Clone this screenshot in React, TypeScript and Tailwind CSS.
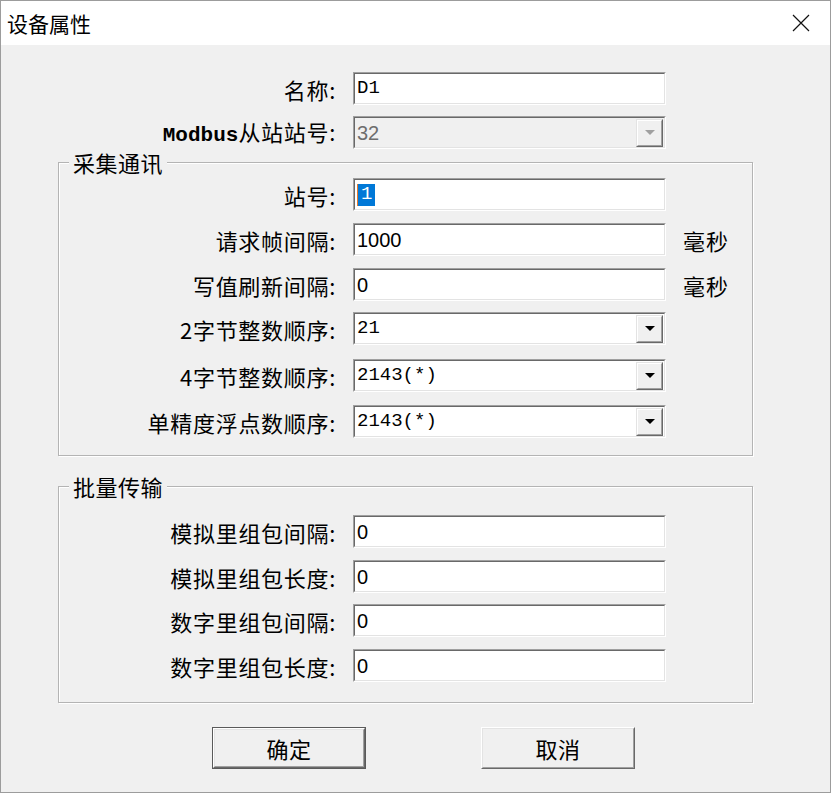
import React from "react";

const CJK = "font-['Noto_Sans_CJK_SC',sans-serif]";
const MONO = "font-['Liberation_Mono','Noto_Sans_CJK_SC',monospace]";
const SANS = "font-['Liberation_Sans',sans-serif]";

function Field({
  children,
  disabled = false,
}: {
  children?: React.ReactNode;
  disabled?: boolean;
}) {
  return (
    <div className="h-[33px] w-[313px] border border-t-[#a0a0a0] border-l-[#a0a0a0] border-b-white border-r-white">
      <div
        className={`flex h-full w-full items-center border border-t-[#696969] border-l-[#696969] border-b-[#e3e3e3] border-r-[#e3e3e3] pl-[2px] ${
          disabled ? "bg-[#f0f0f0]" : "bg-white"
        }`}
      >
        {children}
      </div>
    </div>
  );
}

function DropBtn({ disabled = false }: { disabled?: boolean }) {
  return (
    <div className="ml-auto mr-[1px] h-[28px] w-[27px] border border-t-[#e3e3e3] border-l-[#e3e3e3] border-b-[#696969] border-r-[#696969]">
      <div className="flex h-full w-full items-center justify-center border border-t-white border-l-white border-b-[#a0a0a0] border-r-[#a0a0a0] bg-[#f0f0f0]">
        <div
          className={`h-0 w-0 border-l-[5px] border-r-[5px] border-t-[5px] border-l-transparent border-r-transparent ${
            disabled ? "border-t-[#a0a0a0]" : "border-t-black"
          }`}
        />
      </div>
    </div>
  );
}

function Row({
  label,
  inGroup = false,
  children,
  extra,
  className = "",
}: {
  label: React.ReactNode;
  inGroup?: boolean;
  children: React.ReactNode;
  extra?: React.ReactNode;
  className?: string;
}) {
  return (
    <div className={`flex h-[33px] items-center ${className}`}>
      <div
        className={`${inGroup ? "w-[289px]" : "w-[347px]"} shrink-0 whitespace-nowrap pr-[12px] text-right text-[22px] leading-none tracking-[0.7px] text-black ${CJK}`}
      >
        {label}
      </div>
      <div className="ml-[5px]">{children}</div>
      {extra}
    </div>
  );
}

function Ms() {
  return (
    <div className={`ml-[17px] text-[22px] leading-none tracking-[1px] text-black ${CJK}`}>
      毫秒
    </div>
  );
}

function MonoText({ children }: { children: React.ReactNode }) {
  return (
    <span className={`text-[19px] leading-none text-black ${MONO}`}>
      {children}
    </span>
  );
}

function SansText({
  children,
  gray = false,
}: {
  children: React.ReactNode;
  gray?: boolean;
}) {
  return (
    <span
      className={`text-[20px] leading-none ${gray ? "text-[#6d6d6d]" : "text-black"} ${SANS}`}
    >
      {children}
    </span>
  );
}

function Group({
  title,
  children,
  className = "",
}: {
  title: string;
  children: React.ReactNode;
  className?: string;
}) {
  return (
    <div
      className={`relative ml-[57px] w-[695px] border border-[#b4b4b4] shadow-[1px_1px_0_#ffffff,inset_1px_1px_0_#ffffff] ${className}`}
    >
      <span
        className={`absolute left-[10px] top-[-14px] bg-[#f0f0f0] px-[4px] text-[22px] leading-[26px] tracking-[0.5px] text-black ${CJK}`}
      >
        {title}
      </span>
      {children}
    </div>
  );
}

function Button({
  children,
  isDefault = false,
  className = "",
}: {
  children: React.ReactNode;
  isDefault?: boolean;
  className?: string;
}) {
  const face = `flex h-full w-full items-center justify-center border border-t-[#e3e3e3] border-l-[#e3e3e3] border-b-[#a0a0a0] border-r-[#a0a0a0] bg-[#f0f0f0] text-[22px] tracking-[0.5px] text-black ${CJK}`;
  if (isDefault) {
    return (
      <div className={`h-[42px] w-[154px] border border-[#5a5a5a] ${className}`}>
        <div className="h-full w-full border border-t-white border-l-white border-b-[#696969] border-r-[#696969]">
          <div className={face}>{children}</div>
        </div>
      </div>
    );
  }
  return (
    <div
      className={`h-[42px] w-[154px] border border-t-white border-l-white border-b-[#696969] border-r-[#696969] ${className}`}
    >
      <div className={face}>{children}</div>
    </div>
  );
}

export default function App() {
  return (
    <div className="flex h-[793px] w-[831px] flex-col overflow-hidden border border-[#9c9c9c] bg-[#f0f0f0]">
      {/* title bar */}
      <div className="flex h-[44px] shrink-0 items-center bg-white">
        <span className={`ml-[6px] text-[21px] leading-none text-black ${CJK}`}>
          设备属性
        </span>
        <svg
          className="ml-auto mr-[20px]"
          width="18"
          height="18"
          viewBox="0 0 18 18"
          fill="none"
          stroke="#111"
          strokeWidth="1.2"
        >
          <path d="M1 1 L17 17 M17 1 L1 17" />
        </svg>
      </div>

      {/* body */}
      <Row label="名称:" className="mt-[27px]">
        <Field>
          <MonoText>D1</MonoText>
        </Field>
      </Row>
      <Row
        className="mt-[11px]"
        label={
          <>
            <span className={`font-bold text-[21px] tracking-normal ${MONO}`}>Modbus</span>
            从站站号:
          </>
        }
      >
        <Field disabled>
          <SansText gray>32</SansText>
          <DropBtn disabled />
        </Field>
      </Row>

      <Group title="采集通讯" className="mt-[13px] pt-[15px] pb-[17px]">
        <Row label="站号:" inGroup>
          <Field>
            <span className="flex h-[22px] items-center border-l border-l-[#e87a2a] bg-[#0078d7] px-[3px]">
              <span className={`text-[19px] leading-none text-white ${MONO}`}>1</span>
            </span>
          </Field>
        </Row>
        <Row label="请求帧间隔:" inGroup className="mt-[12px]" extra={<Ms />}>
          <Field>
            <SansText>1000</SansText>
          </Field>
        </Row>
        <Row label="写值刷新间隔:" inGroup className="mt-[12px]" extra={<Ms />}>
          <Field>
            <SansText>0</SansText>
          </Field>
        </Row>
        <Row label="2字节整数顺序:" inGroup className="mt-[11px]">
          <Field>
            <MonoText>21</MonoText>
            <DropBtn />
          </Field>
        </Row>
        <Row label="4字节整数顺序:" inGroup className="mt-[14px]">
          <Field>
            <MonoText>2143(*)</MonoText>
            <DropBtn />
          </Field>
        </Row>
        <Row label="单精度浮点数顺序:" inGroup className="mt-[13px]">
          <Field>
            <MonoText>2143(*)</MonoText>
            <DropBtn />
          </Field>
        </Row>
      </Group>

      <Group title="批量传输" className="mt-[30px] pt-[28px] pb-[20px]">
        <Row label="模拟里组包间隔:" inGroup>
          <Field>
            <SansText>0</SansText>
          </Field>
        </Row>
        <Row label="模拟里组包长度:" inGroup className="mt-[12px]">
          <Field>
            <SansText>0</SansText>
          </Field>
        </Row>
        <Row label="数字里组包间隔:" inGroup className="mt-[11px]">
          <Field>
            <SansText>0</SansText>
          </Field>
        </Row>
        <Row label="数字里组包长度:" inGroup className="mt-[12px]">
          <Field>
            <SansText>0</SansText>
          </Field>
        </Row>
      </Group>

      <div className="mt-[24px] flex">
        <Button isDefault className="ml-[211px]">
          确定
        </Button>
        <Button className="ml-[115px]">取消</Button>
      </div>
    </div>
  );
}
